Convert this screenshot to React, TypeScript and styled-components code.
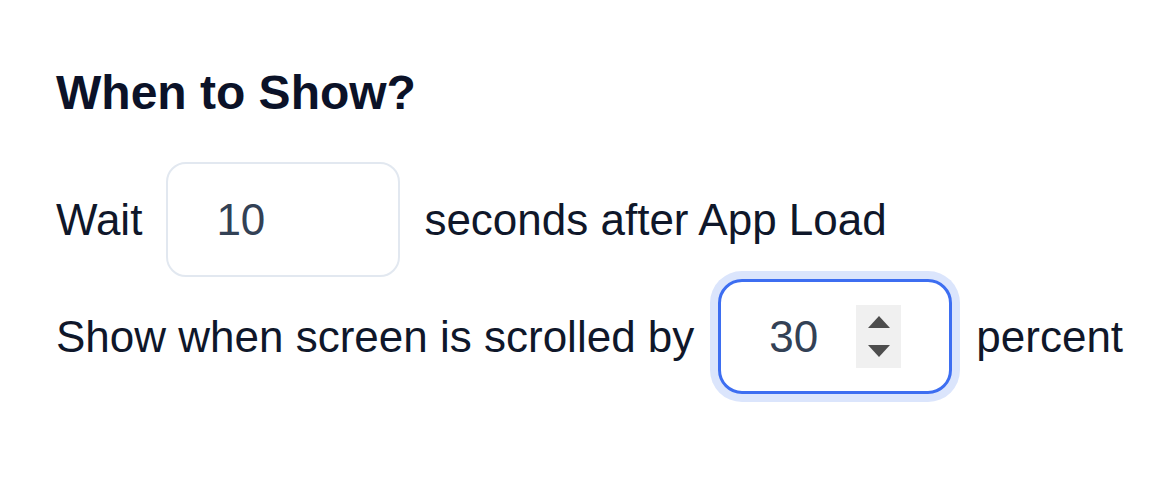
import React from "react";
import styled, { createGlobalStyle } from "styled-components";

const Global = createGlobalStyle`
  html, body { margin: 0; padding: 0; background: #ffffff; }
  body { font-family: "Liberation Sans", Arial, sans-serif; color: #0f172a; }
  * { box-sizing: border-box; }
`;

const Panel = styled.section`
  width: 1160px;
  height: 480px;
  padding: 65px 0 0 56px;
  display: flex;
  flex-direction: column;
`;

const Heading = styled.h2`
  margin: 0 0 41px 0;
  font-size: 48px;
  line-height: 56px;
  font-weight: 700;
  color: #0b1228;
`;

const Rows = styled.div`
  display: flex;
  flex-direction: column;
  gap: 2px;
`;

const Row = styled.div`
  display: flex;
  align-items: center;
  gap: 24px;
  font-size: 44px;
  line-height: 50px;
  color: #0f172a;
`;

const Field = styled.div<{ $focused?: boolean }>`
  width: 234px;
  height: 115px;
  display: flex;
  align-items: center;
  justify-content: space-between;
  padding: 0 48px 0 48px;
  border-radius: ${(p) => (p.$focused ? "24px" : "20px")};
  border: ${(p) => (p.$focused ? "3px solid #3d6ef1" : "2px solid #e2e8f0")};
  box-shadow: ${(p) => (p.$focused ? "0 0 0 8px #dbe5fc" : "none")};
  background: #ffffff;
`;

const Value = styled.input`
  width: 80px;
  border: none;
  outline: none;
  padding: 0;
  margin: 0;
  background: transparent;
  font-family: "Liberation Sans", Arial, sans-serif;
  font-size: 44px;
  line-height: 50px;
  color: #334155;
`;

const Spinner = styled.div`
  width: 45px;
  height: 63px;
  background: #f0f0f0;
  display: flex;
  flex-direction: column;
  align-items: center;
  justify-content: center;
  gap: 17px;
`;

const Arrow = ({ down }: { down?: boolean }) => (
  <svg width="22" height="12" viewBox="0 0 22 12">
    <polygon
      points={down ? "0,0 22,0 11,12" : "11,0 22,12 0,12"}
      fill="#4d4d4d"
    />
  </svg>
);

export default function App() {
  return (
    <>
      <Global />
      <Panel>
        <Heading>When to Show?</Heading>
        <Rows>
          <Row>
            <span>Wait</span>
            <Field>
              <Value readOnly value="10" />
            </Field>
            <span>seconds after App Load</span>
          </Row>
          <Row>
            <span>Show when screen is scrolled by</span>
            <Field $focused>
              <Value readOnly value="30" />
              <Spinner>
                <Arrow />
                <Arrow down />
              </Spinner>
            </Field>
            <span>percent</span>
          </Row>
        </Rows>
      </Panel>
    </>
  );
}
